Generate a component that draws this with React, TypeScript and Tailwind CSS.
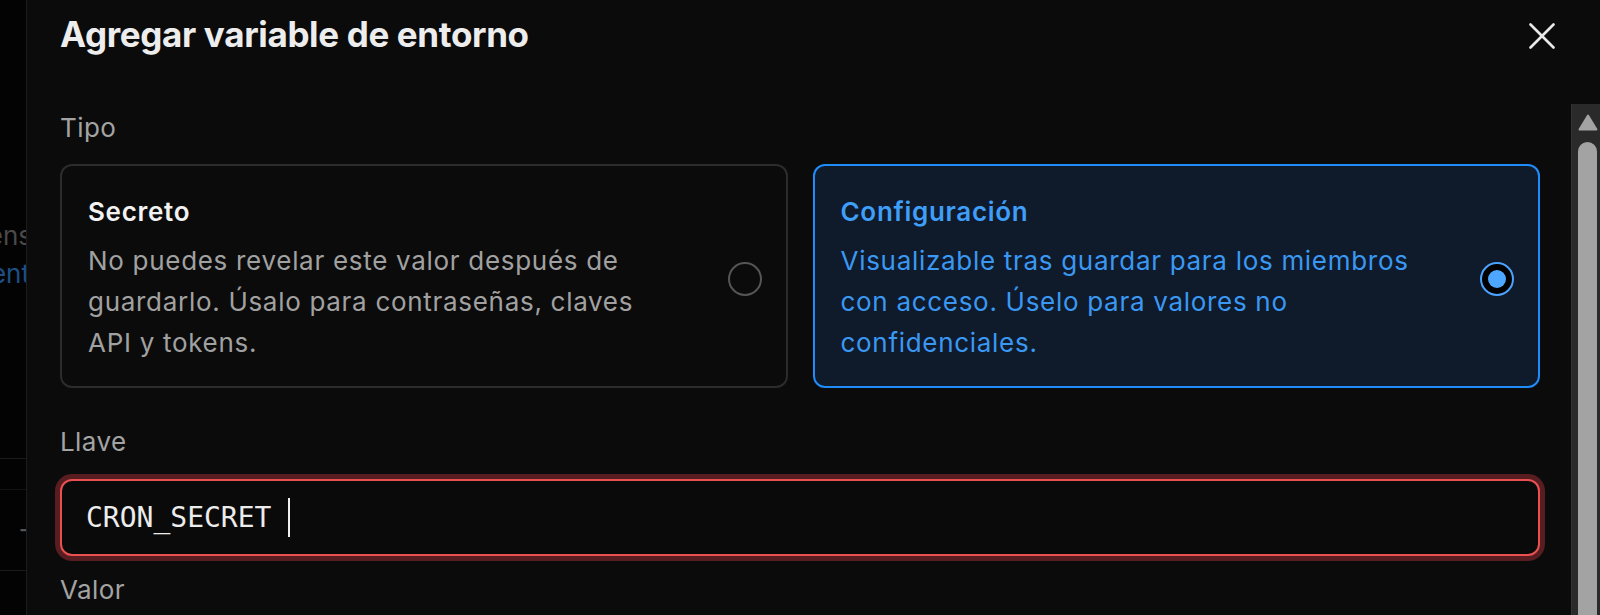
function CloseIcon() {
  return (
    <svg width="26" height="26" viewBox="0 0 26 26" fill="none" stroke="#e8e8e8" strokeWidth="2.6" strokeLinecap="round">
      <path d="M1.5 1.5 24.5 24.5" />
      <path d="M24.5 1.5 1.5 24.5" />
    </svg>
  );
}

function Radio({ checked }: { checked: boolean }) {
  if (checked) {
    return (
      <span className="flex h-[34px] w-[34px] shrink-0 items-center justify-center rounded-full border-[2.5px] border-[#4aa3ff] bg-black">
        <span className="h-[18px] w-[18px] rounded-full bg-[#4da6ff]" />
      </span>
    );
  }
  return <span className="h-[34px] w-[34px] shrink-0 rounded-full border-2 border-[#555555]" />;
}

type TypeOption = {
  title: string;
  description: string;
  selected: boolean;
};

const options: TypeOption[] = [
  {
    title: 'Secreto',
    description: 'No puedes revelar este valor después de guardarlo. Úsalo para contraseñas, claves API y tokens.',
    selected: false,
  },
  {
    title: 'Configuración',
    description: 'Visualizable tras guardar para los miembros con acceso. Úselo para valores no confidenciales.',
    selected: true,
  },
];

function TypeCard({ option }: { option: TypeOption }) {
  return (
    <div
      className={
        option.selected
          ? 'flex items-center justify-between gap-[20px] rounded-[12px] border-2 border-[#1e8cf9] bg-[#0f1a2b] pl-[26px] pr-[24px] pt-[28px] pb-[23px]'
          : 'flex items-center justify-between gap-[20px] rounded-[12px] border-2 border-[#2c2c2c] bg-[#0b0b0b] pl-[26px] pr-[24px] pt-[28px] pb-[23px]'
      }
    >
      <div className="max-w-[588px] tracking-[0.7px]">
        <h3
          className={
            option.selected
              ? 'text-[26px] font-semibold leading-[36px] text-[#3f9ef8]'
              : 'text-[26px] font-semibold leading-[36px] text-[#f2f2f2]'
          }
        >
          {option.title}
        </h3>
        <p
          className={
            option.selected
              ? 'mt-[10px] text-[26px] leading-[41px] text-[#3a98f2]'
              : 'mt-[10px] text-[26px] leading-[41px] text-[#a1a1a1]'
          }
        >
          {option.description}
        </p>
      </div>
      <Radio checked={option.selected} />
    </div>
  );
}

export default function App() {
  return (
    <div className="flex h-[615px] w-[1600px] overflow-hidden bg-black font-['Inter','Liberation_Sans',sans-serif]">
      {/* page behind the dialog */}
      <aside className="flex w-[27px] shrink-0 flex-col overflow-hidden border-r border-[#1c1c1c] bg-[#030303] text-[26px] leading-[36px]">
        <div className="mt-[218px] flex justify-end">
          <span className="-mr-[6px] shrink-0 whitespace-nowrap text-[#4a4a4a]">Variables y tokens</span>
        </div>
        <div className="mt-[2px] flex justify-end">
          <span className="-mr-[4px] shrink-0 whitespace-nowrap text-[#1d4f86]">Ir a la documentación del ent</span>
        </div>
        <div className="mt-[166px] border-t border-[#1a1a1a]" />
        <div className="mt-[30px] border-t border-[#141414]" />
        <div className="mt-[31px] flex justify-end">
          <span className="-mr-[10px] shrink-0 whitespace-nowrap text-[#555555]">T</span>
        </div>
        <div className="mt-[13px] border-t border-[#1a1a1a]" />
      </aside>

      <main className="flex min-w-0 flex-1 flex-col bg-[#0b0b0b]">
        <header className="flex h-[104px] shrink-0 items-start justify-between pl-[33px] pr-[45px] pt-[13px]">
          <h2 className="text-[35px] font-bold leading-[42px] tracking-[-0.01em] text-[#ededed]">
            Agregar variable de entorno
          </h2>
          <button className="mt-[10px]">
            <CloseIcon />
          </button>
        </header>

        <div className="flex min-h-0 flex-1">
          <div className="flex-1 pl-[33px] pr-[31px] pt-[6px]">
            <label className="block text-[26px] leading-[36px] tracking-[0.4px] text-[#a3a3a3]">Tipo</label>
            <div className="mt-[18px] grid grid-cols-2 gap-[25px]">
              {options.map((option) => (
                <TypeCard key={option.title} option={option} />
              ))}
            </div>

            <label className="mt-[36px] block text-[26px] leading-[36px] tracking-[0.4px] text-[#a3a3a3]">Llave</label>
            <div className="mt-[19px] flex h-[77px] items-center rounded-[12px] border-2 border-[#e9504f] bg-[#0a0a0a] px-[24px] shadow-[0_0_0_5px_#571d21]">
              <span className="whitespace-pre font-['DejaVu_Sans_Mono',monospace] text-[28px] text-[#ececec]">CRON_SECRET </span>
              <span className="h-[39px] w-[2px] bg-[#f0f0f0]" />
            </div>

            <label className="mt-[16px] block text-[26px] leading-[36px] tracking-[0.4px] text-[#a3a3a3]">Valor</label>
          </div>

          {/* scrollbar */}
          <div className="flex w-[29px] shrink-0 flex-col border-l border-[#333333] bg-[#2a2a2a] pl-[6px] pr-[3px] pt-[10px]">
            <svg width="20" height="17" viewBox="0 0 20 17">
              <path d="M10 1.5 18.5 15.5 1.5 15.5Z" fill="#a3a3a3" stroke="#a3a3a3" strokeWidth="2" strokeLinejoin="round" />
            </svg>
            <div className="mt-[11px] flex-1 rounded-t-[10px] bg-[#a3a3a3]" />
          </div>
        </div>
      </main>
    </div>
  );
}
